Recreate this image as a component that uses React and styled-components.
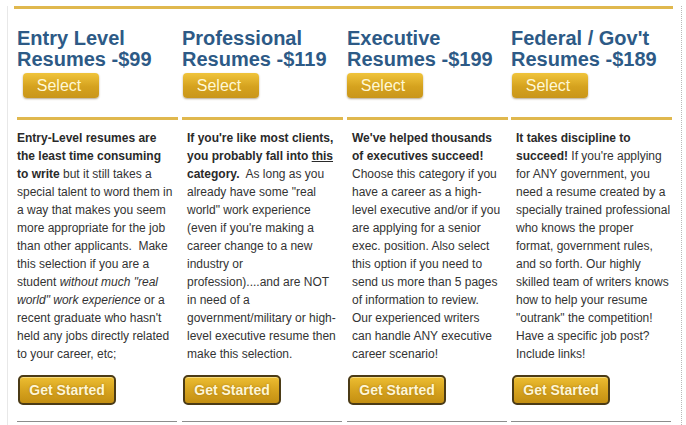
import React from "react"
import styled, { createGlobalStyle } from "styled-components"

const plans = [
    {
        title: "Entry Level Resumes -$99",
        selectOffset: 6,
        bodyOffset: 0,
        bodyWidth: 156,
        body: (
            <>
                <b>Entry-Level resumes are the least time consuming to write</b> but it still takes a special talent
                to word them in a way that makes you seem more appropriate for the job than other applicants.{"\u00a0 "}Make
                this selection if you are a student <i>without much "real world" work experience</i> or a recent
                graduate who hasn't held any jobs directly related to your career, etc;
            </>
        ),
    },
    {
        title: "Professional Resumes -$119",
        selectOffset: 1,
        bodyOffset: 5,
        bodyWidth: 150.5,
        body: (
            <>
                <b>If you're like most clients, you probably fall into <u>this</u> category.</b>{"\u00a0 "}As long as you
                already have some "real world" work experience (even if you're making a career change to a new
                industry or profession)....and are NOT in need of a government/military or high-level executive
                resume then make this selection.
            </>
        ),
    },
    {
        title: "Executive Resumes -$199",
        selectOffset: 0,
        bodyOffset: 5,
        bodyWidth: 149.3,
        body: (
            <>
                <b>We've helped thousands of executives succeed!</b> Choose this category if you have a career as a
                high-level executive and/or if you are applying for a senior exec. position. Also select this option
                if you need to send us more than 5 pages of information to review. Our experienced writers can handle
                ANY executive career scenario!
            </>
        ),
    },
    {
        title: "Federal / Gov't Resumes -$189",
        selectOffset: 1,
        bodyOffset: 5,
        bodyWidth: 156,
        body: (
            <>
                <b>It takes discipline to succeed!</b> If you're applying for ANY government, you need a resume created
                by a specially trained professional who knows the proper format, government rules, and so forth. Our
                highly skilled team of writers knows how to help your resume "outrank" the competition! Have a
                specific job post? Include links!
            </>
        ),
    },
]

const App = () => {
    return (
        <>
            <GlobalStyle />
            <Page>
                <TopRule />
                <Columns>
                    {plans.map((plan) => (
                        <Column key={plan.title}>
                            <Heading>{plan.title}</Heading>
                            <SelectButton $offset={plan.selectOffset}>Select</SelectButton>
                            <GoldRule />
                            <Body $offset={plan.bodyOffset} $width={plan.bodyWidth}>
                                {plan.body}
                            </Body>
                            <StartButton>Get Started</StartButton>
                            <GrayRule />
                        </Column>
                    ))}
                </Columns>
            </Page>
        </>
    )
}

export default App

// Styling
const GlobalStyle = createGlobalStyle`
    body {
        margin: 0;
        background: #fff;
        font-family: "Liberation Sans", Arial, sans-serif;
    }
`
const Page = styled.div`
    margin-left: 7px;
    width: 675px;
    min-height: 425px;
    border-left: 1px solid #e8e8e8;
    border-right: 1px dotted #b8b8b8;
    box-sizing: border-box;
`
const TopRule = styled.div`
    margin: 6px 0 0 6px;
    width: 659px;
    height: 3px;
    background: #e0b84e;
`
const Columns = styled.div`
    display: grid;
    grid-template-columns: 165px 165px 164px 161px;
    padding-left: 9px;
`
const Column = styled.div`
    display: flex;
    flex-direction: column;
    align-items: flex-start;
`
const Heading = styled.h2`
    margin: 19px 0 0;
    width: 158px;
    font-size: 20px;
    line-height: 21px;
    font-weight: bold;
    color: #2d5a86;
`
const SelectButton = styled.button`
    margin: 3px 0 0 ${(p) => p.$offset}px;
    width: 76px;
    height: 25px;
    padding: 0 4px 0 0;
    border: none;
    border-radius: 4px;
    background: linear-gradient(#f0c43c, #d5a21e 55%, #c9961a);
    box-shadow: 0 1px 2px rgba(90, 60, 0, 0.45);
    font-family: "Liberation Sans", Arial, sans-serif;
    font-size: 16px;
    color: #fff8d6;
    cursor: pointer;
`
const GoldRule = styled.div`
    margin-top: 19px;
    width: 161px;
    height: 3px;
    background: #e0b84e;
`
const Body = styled.p`
    margin: 9px 0 0;
    padding-left: ${(p) => p.$offset}px;
    width: ${(p) => p.$width + p.$offset}px;
    box-sizing: border-box;
    font-size: 12px;
    line-height: 18px;
    color: #333;
    b {
        color: #2a2a2a;
    }
`
const StartButton = styled.button`
    margin: 12px 0 0 1px;
    width: 98px;
    height: 30px;
    padding: 0;
    border: 2px solid #4b3b16;
    border-radius: 5px;
    background: linear-gradient(#ecbd31, #d7a41f 50%, #c48f12);
    box-shadow: inset 0 1px 0 rgba(255, 240, 180, 0.6);
    font-family: "Liberation Sans", Arial, sans-serif;
    font-size: 14px;
    font-weight: bold;
    color: #fff6d6;
    text-shadow: 0 0 2px rgba(120, 80, 0, 0.5);
    cursor: pointer;
`
const GrayRule = styled.div`
    margin-top: 16px;
    width: 160px;
    height: 1px;
    background: #8c8c8c;
`
